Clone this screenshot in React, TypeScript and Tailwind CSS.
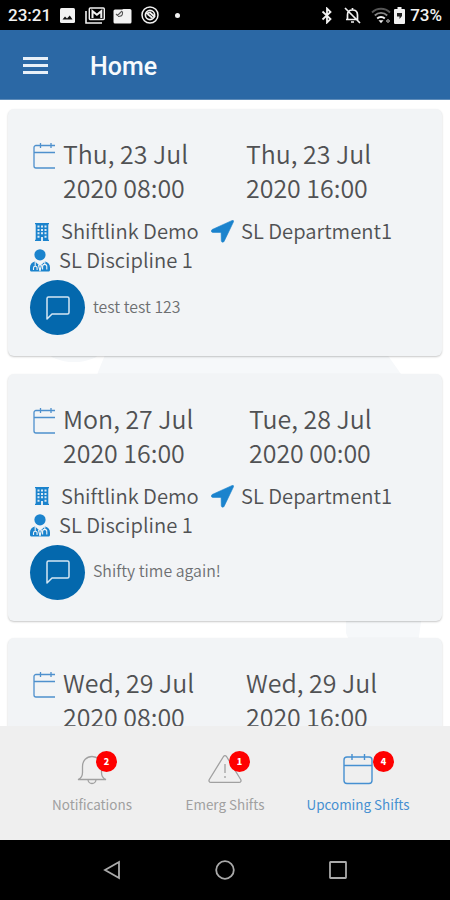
import type { ReactNode } from 'react';
import clsx from 'clsx';

interface Shift {
  id: number;
  start: [string, string];
  end: [string, string];
  endClass: string;
  note: string;
}

const shifts: Shift[] = [
  { id: 1, start: ['Thu, 23 Jul', '2020 08:00'], end: ['Thu, 23 Jul', '2020 16:00'], endClass: 'pl-0', note: 'test test 123' },
  { id: 2, start: ['Mon, 27 Jul', '2020 16:00'], end: ['Tue, 28 Jul', '2020 00:00'], endClass: 'pl-[3px]', note: 'Shifty time again!' },
  { id: 3, start: ['Wed, 29 Jul', '2020 08:00'], end: ['Wed, 29 Jul', '2020 16:00'], endClass: 'pl-0', note: '' },
];

function StatusBar() {
  return (
    <div className="flex h-[30px] shrink-0 items-center bg-black pt-[2px] pr-[8px] pl-[8px] font-[Roboto,sans-serif] text-[17px] font-medium text-[#f2f2f2]">
      <span className="w-[52px]">23:21</span>
      {/* picture */}
      <svg className="mt-[-2px]" width="15" height="15" viewBox="0 0 15 15">
        <rect width="15" height="15" rx="1.5" fill="#f2f2f2" />
        <path d="M2.500 11.500l2.500-3 2 2 2.800-3 2.700 4z" fill="#111" />
      </svg>
      {/* mail */}
      <svg className="mt-[-1px] ml-[10px]" width="20" height="17" viewBox="0 0 20 17" fill="none" stroke="#f2f2f2">
        <path d="M1 4v12h16" strokeWidth="1.6" />
        <rect x="4.3" y="1" width="15" height="11.5" rx="1" strokeWidth="1.4" />
        <path d="M7.500 11V4.200l4.400 3.600 4.400-3.600V11" strokeWidth="2" />
      </svg>
      <svg className="mt-[-1px] ml-[8px]" width="19" height="16" viewBox="0 0 19 16">
        <path d="M2 1.500h7L10.500 1H17a1.500 1.500 0 0 1 1.500 1.500V14a1.500 1.500 0 0 1-1.500 1.500H2A1.500 1.500 0 0 1 .5 14V3A1.500 1.500 0 0 1 2 1.500z" fill="#f2f2f2" />
        <path d="M3 6l1.500 1.500L9 3M9.500 3.500v2c0 2-2 3-4.500 3" fill="none" stroke="#555" strokeWidth="1.100" />
      </svg>
      <svg className="mt-[-2px] ml-[9px]" width="18" height="18" viewBox="0 0 18 18" fill="none" stroke="#f2f2f2">
        <circle cx="9" cy="9" r="8" strokeWidth="1.500" />
        <circle cx="9" cy="9" r="4.600" strokeWidth="1.700" />
        <path d="M5 7.500l4-1 5 4.500M6.500 8l5 4" strokeWidth="1.800" />
      </svg>
      <span className="mt-[-2px] ml-[16px] size-[5px] rounded-full bg-[#f2f2f2]" />
      <div className="ml-auto flex items-center">
        <svg className="mt-[-1px]" width="12" height="17" viewBox="0 0 12 17" fill="none" stroke="#f2f2f2" strokeWidth="1.800">
          <path d="M1.500 4.500l8 7.500L6 15.500v-14L9.500 5l-8 7.500" />
        </svg>
        <svg className="mt-[-1px] ml-[11px]" width="17" height="17" viewBox="0 0 17 17" fill="none" stroke="#f2f2f2" strokeWidth="1.700">
          <path d="M3.500 12.500V8c0-3 2-5 5-5s5 2 5 5v4.500H2M8.500 1v2M7 15h3M1 1l15 15" />
        </svg>
        <svg className="mt-[-1px] ml-[10px]" width="20" height="17" viewBox="0 0 20 17" fill="none" strokeWidth="1.800">
          <path d="M1 5.500c5-5 13-5 18 0" stroke="#555" />
          <path d="M3.800 8.500c3.500-3.500 8.900-3.500 12.400 0" stroke="#888" />
          <path d="M6.200 11.500c2-2 5.600-2 7.600 0" stroke="#f2f2f2" />
          <path d="M7.500 13.200l2.500 3 2.500-3z" fill="#f2f2f2" />
          <path d="M15 14h4M17 12v4" stroke="#777" />
        </svg>
        <svg className="mt-[-1px] ml-[3px]" width="11" height="17" viewBox="0 0 11 17">
          <path d="M3.500 0h4v2H10a1 1 0 0 1 1 1v13a1 1 0 0 1-1 1H1a1 1 0 0 1-1-1V3a1 1 0 0 1 1-1h2.500z" fill="#f2f2f2" />
          <path d="M3 6h5v3L5.500 12V9.500H3z" fill="#222" />
        </svg>
        <span className="ml-[5px]">73%</span>
      </div>
    </div>
  );
}

function Header() {
  return (
    <header className="flex h-[70px] shrink-0 items-center border-b border-[#5f8cb9] bg-[#2b68a5] pt-[5px] pl-[23px] text-[#f7fafd]">
      <div className="mt-[-4px] flex w-[25px] flex-col gap-[4px]">
        <span className="h-[3px] bg-[#e8f0f8]" />
        <span className="h-[3px] bg-[#e8f0f8]" />
        <span className="h-[3px] bg-[#e8f0f8]" />
      </div>
      <h1 className="ml-[42px] font-[Roboto,sans-serif] text-[25px] font-medium">Home</h1>
    </header>
  );
}

function CardCalendarIcon() {
  return (
    <svg className="mt-[6px] shrink-0" width="22" height="28" viewBox="0 0 22 28" fill="none" stroke="#4e90cd" strokeWidth="1.300">
      <path d="M22 3.500H3a2 2 0 0 0-2 2V24a2 2 0 0 0 2 2h19M1 10.500h21M7.500 1v5M18 1v5" />
    </svg>
  );
}

function BuildingIcon() {
  return (
    <svg className="mt-[2px]" width="14" height="18" viewBox="0 0 14 18">
      <path d="M0 0h14v1.200h-.7v15.600h.7V18H0v-1.200h.7V1.200H0z" fill="#1b83cd" />
      <path d="M2.500 2.500h2v2h-2zM6 2.500h2v2H6zM9.500 2.500h2v2h-2zM2.500 5.900h2v2h-2zM6 5.900h2v2H6zM9.500 5.900h2v2h-2zM2.500 9.300h2v2h-2zM6 9.300h2v2H6zM9.500 9.300h2v2h-2zM2.500 12.700h2v2h-2zM9.500 12.700h2v2h-2zM6 14h2v4H6z" fill="#dbe9f4" />
    </svg>
  );
}

function ArrowIcon() {
  return (
    <svg className="mt-[2px]" width="23" height="23" viewBox="0 0 23 23">
      <path d="M21.300.4L1.200 9.500c-1.600.9-1 2.800.6 2.900h8.300l.2 8.400c.1 1.600 2.200 2 2.900.4l9.300-19.400c.4-1-.3-1.700-1.200-1.400z" fill="#1b83cd" stroke="#1b83cd" strokeWidth=".6" />
    </svg>
  );
}

function DoctorIcon() {
  return (
    <svg className="mt-[2px]" width="20" height="23" viewBox="0 0 20 23">
      <circle cx="10" cy="5.800" r="5.600" fill="#1b83cd" />
      <path d="M0 21v-2.500C0 15.500 2 13.200 5 12.600l5 4.400 5-4.400c3 .6 5 2.900 5 5.900V21c0 .8-.6 1.500-1.500 1.500h-17C.6 22.500 0 21.800 0 21z" fill="#1b83cd" />
      <path d="M5.200 12.500V17M14.800 12.500v3M3.500 21v-2a1.800 1.800 0 0 1 3.600 0v2M12.600 20.500v-3a2 2 0 0 1 4.200 0v3M8.500 16l1.500 6 1.500-6" fill="none" stroke="#f2f4f6" strokeWidth="1.100" />
    </svg>
  );
}

function ShiftCard({ shift }: { shift: Shift }) {
  return (
    <div className="h-[247px] shrink-0 rounded-[6px] bg-[#f2f4f6] pt-[27px] pl-[22px] font-[350] text-[#505153] shadow-[0_1px_2px_rgba(0,0,0,0.22)]">
      <div className="flex h-[69px] pl-[3px] text-[24.950px] leading-[34.300px]">
        <CardCalendarIcon />
        <div className="ml-[8px] w-[183px]">
          {shift.start.map((line) => <p key={line}>{line}</p>)}
        </div>
        <div className={shift.endClass}>
          {shift.end.map((line) => <p key={line}>{line}</p>)}
        </div>
      </div>

      <div className="mt-[11px] flex h-[29px] items-center text-[20.200px] leading-[29px]">
        <div className="flex w-[31px] pl-[5px]"><BuildingIcon /></div>
        <span className="w-[150px]">Shiftlink Demo</span>
        <div className="w-[30px]"><ArrowIcon /></div>
        <span>SL Department1</span>
      </div>
      <div className="flex h-[29px] items-center text-[20.200px] leading-[29px]">
        <div className="w-[29px]"><DoctorIcon /></div>
        <span>SL Discipline 1</span>
      </div>

      <div className="mt-[6px] flex items-center">
        <div className="flex size-[55px] items-center justify-center rounded-full bg-[#0468ad]">
          <svg width="24" height="24" viewBox="0 0 24 24" fill="none" stroke="#d5e6f3" strokeWidth="1.500" strokeLinejoin="round">
            <path d="M2.500 1h19a1.500 1.500 0 0 1 1.500 1.500v14a1.500 1.500 0 0 1-1.500 1.500H6l-5 5V2.500A1.500 1.500 0 0 1 2.500 1z" />
          </svg>
        </div>
        <span className="mt-[-2px] ml-[8px] text-[15.850px] text-[#6d6f71]">{shift.note}</span>
      </div>
    </div>
  );
}

function Tab({ label, count, active, badgeClass, children }: { label: string; count: number; active?: boolean; badgeClass: string; children: ReactNode }) {
  return (
    <button className={clsx('flex w-[133px] flex-col items-center', active ? 'text-[#4690d1]' : 'text-[#a0a0a0]')}>
      <span className="relative flex h-[36px] w-[32px] items-center justify-center">
        {children}
        <span className={clsx('absolute top-[-1px] flex size-[21px] items-center justify-center rounded-full bg-[#fe0000] text-[9px] leading-[12px] font-black text-white', badgeClass)}>
          {count}
        </span>
      </span>
      <span className="mt-[6px] text-[13.450px] leading-[20px] whitespace-nowrap">{label}</span>
    </button>
  );
}

export default function App() {
  return (
    <div className="flex h-[900px] w-[450px] flex-col overflow-hidden bg-white font-['Noto_Sans_CJK_SC',sans-serif]">
      <StatusBar />
      <Header />

      <main className="relative h-[626px] shrink-0 overflow-hidden">
        {/* watermark behind the list */}
        <svg className="absolute inset-0" width="450" height="626" viewBox="0 0 450 626" fill="#f6f8fa">
          <ellipse cx="74" cy="251" rx="26" ry="11" />
          <path d="M107 250h277l17 24v10H95l3-12z" />
          <path d="M346 515h76l-4 28h-68l-4-10z" />
        </svg>
        <div className="relative flex flex-col gap-[17.500px] px-[8px] pt-[9px]">
          {shifts.map((shift) => <ShiftCard key={shift.id} shift={shift} />)}
        </div>
      </main>

      <nav className="flex h-[114px] shrink-0 justify-center bg-[#efefef] pt-[26px]">
        <Tab label="Notifications" count={2} badgeClass="left-[20px]">
          <svg width="30" height="30" viewBox="0 0 30 30" fill="none" stroke="#a0a0a0" strokeWidth="1.300">
            <path d="M1 24.500c3-1 4.500-3 4.500-7V11.500C5.500 5.500 9.500 1.500 15 1.500s9.500 4 9.500 10v6c0 4 1.500 6 4.500 7zM11 24.500a4 4 0 0 0 8 0" />
          </svg>
        </Tab>
        <Tab label="Emerg Shifts" count={1} badgeClass="left-[20px]">
          <svg className="mt-[-3px] shrink-0" width="34" height="30" viewBox="0 0 34 30" fill="none" stroke="#a0a0a0" strokeWidth="1.300">
            <path d="M15.500 2.500L1.300 25.500c-.8 1.500 0 2.800 1.500 2.800h28.400c1.500 0 2.300-1.300 1.500-2.800L18.500 2.500c-.8-1.300-2.200-1.300-3 0zM17 10v9M17 22v2" />
          </svg>
        </Tab>
        <Tab label="Upcoming Shifts" count={4} active badgeClass="left-[31px]">
          <svg className="mt-[-2px]" width="30" height="32" viewBox="0 0 30 32" fill="none" stroke="#4690d1" strokeWidth="1.400">
            <path d="M4 4h22a3 3 0 0 1 3 3v20.500a3 3 0 0 1-3 3H4a3 3 0 0 1-3-3V7a3 3 0 0 1 3-3zM1 12.500h28M9 1v6M21.500 1v6" />
          </svg>
        </Tab>
      </nav>

      <div className="flex h-[60px] shrink-0 items-center bg-black pl-[103px]">
        <svg width="18" height="20" viewBox="0 0 18 20" fill="none" stroke="#aaa" strokeWidth="1.800">
          <path d="M16 2v16L2 10z" />
        </svg>
        <svg className="ml-[94px]" width="20" height="20" viewBox="0 0 20 20" fill="none" stroke="#aaa" strokeWidth="1.800">
          <circle cx="10" cy="10" r="8.800" />
        </svg>
        <svg className="ml-[94px]" width="18" height="18" viewBox="0 0 18 18" fill="none" stroke="#aaa" strokeWidth="1.800">
          <rect x="1" y="1" width="16" height="16" rx=".5" />
        </svg>
      </div>
    </div>
  );
}
